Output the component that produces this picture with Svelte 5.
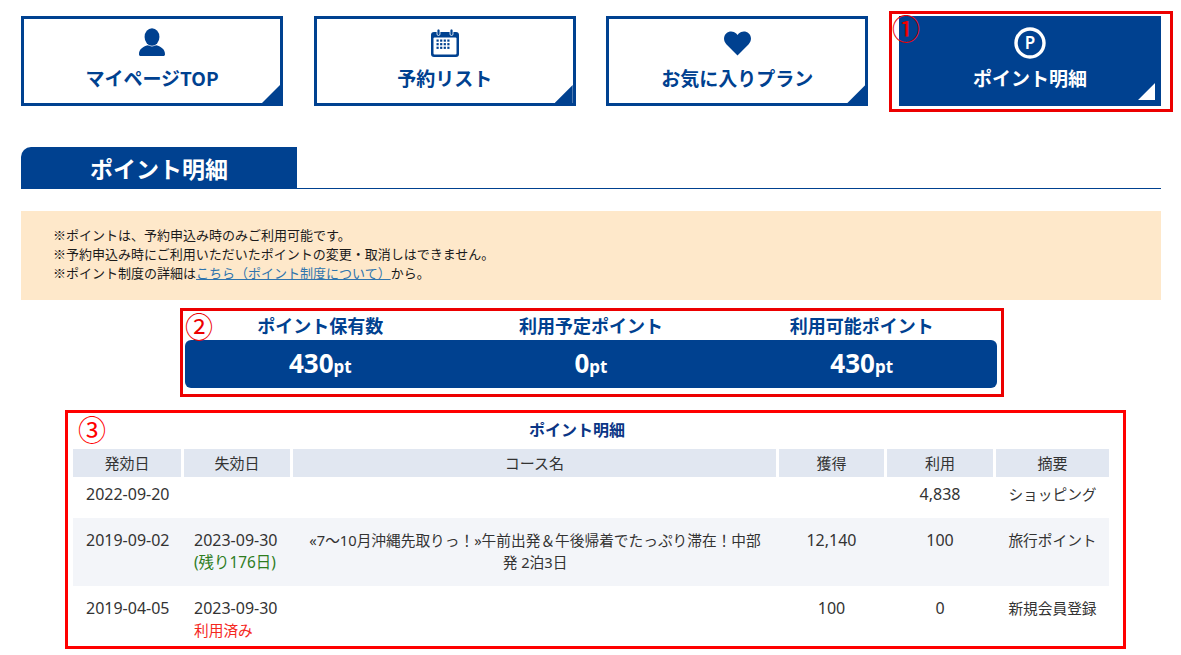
<script>
  const nav = [
    { label: 'マイページTOP', icon: 'user' },
    { label: '予約リスト', icon: 'cal' },
    { label: 'お気に入りプラン', icon: 'heart' },
    { label: 'ポイント明細', icon: 'point', active: true }
  ];
  const notes = ['※ポイントは、予約申込み時のみご利用可能です。', '※予約申込み時にご利用いただいたポイントの変更・取消しはできません。'];
  const totals = [
    { label: 'ポイント保有数', value: '430' },
    { label: '利用予定ポイント', value: '0' },
    { label: '利用可能ポイント', value: '430' }
  ];
  const heads = ['発効日', '失効日', 'コース名', '獲得', '利用', '摘要'];
  const rows = [
    { start: '2022-09-20', end: '', course: '', got: '', used: '4,838', memo: 'ショッピング' },
    { start: '2019-09-02', end: '2023-09-30', sub: '(残り176日)', subClass: 'green', course: '«7～10月沖縄先取りっ！»午前出発＆午後帰着でたっぷり滞在！中部発 2泊3日', got: '12,140', used: '100', memo: '旅行ポイント' },
    { start: '2019-04-05', end: '2023-09-30', sub: '利用済み', subClass: 'red', course: '', got: '100', used: '0', memo: '新規会員登録' }
  ];
  const dots = [];
  for (let y = 0; y < 3; y++) for (let x = 0; x < 4; x++) dots.push({ x: 6.5 + x * 3.6, y: 11.5 + y * 3.6 });
</script>

<div class="page">
  <nav class="nav">
    {#each nav as item}
      <a class="card" class:active={item.active} href="#top">
        <span class="icon">
          {#if item.icon === 'user'}
            <svg viewBox="0 0 28 32" width="26" height="30"><ellipse cx="14" cy="9.5" rx="8" ry="9.5" fill="currentColor"/><path d="M2 30c-1.4 0-2-.8-2-2 0-5 4-8 9.500-9.500 3 1.600 6 1.600 9 0C24 20 28 23 28 28c0 1.200-.6 2-2 2z" fill="currentColor"/></svg>
          {:else if item.icon === 'cal'}
            <svg viewBox="0 0 30 30" width="30" height="30">
              <rect x="1" y="4" width="28" height="25" rx="3" fill="currentColor"/>
              <rect x="3.500" y="9.500" width="23" height="17" rx="1" fill="#fff"/>
              <rect x="7" y="1" width="3" height="6.500" rx="1.500" fill="currentColor" stroke="#fff" stroke-width=".8"/>
              <rect x="20" y="1" width="3" height="6.500" rx="1.500" fill="currentColor" stroke="#fff" stroke-width=".8"/>
              {#each dots as d}<rect x={d.x} y={d.y} width="2.200" height="2.200" fill="currentColor"/>{/each}
            </svg>
          {:else if item.icon === 'heart'}
            <svg viewBox="0 0 28 25" width="27" height="25"><path d="M14 25 2.400 13.200C-.8 9.800-.7 4.800 2.300 2 5.300-.8 10-.6 12.700 2.200L14 3.700l1.300-1.500C18-.6 22.700-.8 25.700 2c3 2.800 3.100 7.800-.1 11.200z" fill="currentColor"/></svg>
          {:else}
            <svg viewBox="0 0 32 32" width="32" height="32"><circle cx="16" cy="16" r="14" fill="none" stroke="currentColor" stroke-width="3.400"/><text x="16" y="22" text-anchor="middle" class="ptext">P</text></svg>
          {/if}
        </span>
        <span class="label">{item.label}</span>
        <span class="corner"></span>
      </a>
    {/each}
  </nav>

  <div class="heading"><h1>ポイント明細</h1></div>

  <div class="notice">
    {#each notes as n}<p>{n}</p>{/each}
    <p>※ポイント制度の詳細は<a href="#top">こちら（ポイント制度について）</a>から。</p>
  </div>

  <section class="summary">
    <div class="labels">
      {#each totals as t}<div>{t.label}</div>{/each}
    </div>
    <div class="bar">
      {#each totals as t}<div><b>{t.value}</b><small>pt</small></div>{/each}
    </div>
  </section>

  <section class="history">
    <h2>ポイント明細</h2>
    <table>
      <thead>
        <tr>{#each heads as h}<th>{h}</th>{/each}</tr>
      </thead>
      <tbody>
        {#each rows as r}
          <tr>
            <td class="date first"><span class="digits">{r.start}</span></td>
            <td class="date second"><span class="digits">{r.end}</span>{#if r.sub}<br /><span class={r.subClass}>{r.sub}</span>{/if}</td>
            <td class="course">{r.course}</td>
            <td><span class="digits">{r.got}</span></td>
            <td><span class="digits">{r.used}</span></td>
            <td class="memo">{r.memo}</td>
          </tr>
        {/each}
      </tbody>
    </table>
  </section>

  <div class="frame f1"></div>
  <div class="frame f2"></div>
  <div class="frame f3"></div>
  <span class="num n1">①</span>
  <span class="num n2">②</span>
  <span class="num n3">③</span>
</div>

<style>
  :global(body) {
    margin: 0;
    background: #fff;
  }
  .page {
    position: relative;
    box-sizing: border-box;
    width: 1181px;
    height: 655px;
    overflow: hidden;
    padding: 16px 20px 0 21px;
    font-family: "Noto Sans CJK JP", "Noto Sans", sans-serif;
    color: #222;
  }
  .nav {
    display: flex;
    gap: 30.67px;
  }
  .card {
    position: relative;
    box-sizing: border-box;
    flex: 1;
    height: 90px;
    border: 3px solid #004190;
    display: flex;
    flex-direction: column;
    align-items: center;
    color: #004190;
    text-decoration: none;
    background: #fff;
  }
  .card.active {
    background: #004190;
    color: #fff;
  }
  .icon {
    height: 34px;
    margin-top: 7px;
    display: flex;
    align-items: center;
    justify-content: center;
  }
  .ptext {
    font: 600 17px "Noto Sans", sans-serif;
    fill: currentColor;
  }
  .label {
    font-size: 19px;
    font-weight: 700;
    line-height: 26px;
    margin-top: 5px;
  }
  .corner {
    position: absolute;
    right: 0;
    bottom: 0;
    width: 18px;
    height: 18px;
    background: #004190;
    clip-path: polygon(100% 0, 100% 100%, 0 100%);
  }
  .active .corner {
    background: #fff;
    right: 3px;
    bottom: 3px;
    width: 17px;
    height: 17px;
  }
  .heading {
    margin-top: 41px;
    border-bottom: 1px solid #004190;
    height: 41px;
  }
  h1 {
    margin: 0;
    width: 276px;
    height: 41px;
    background: #004190;
    border-radius: 10px 0 0 0;
    color: #fff;
    font-size: 23px;
    font-weight: 700;
    line-height: 42px;
    text-align: center;
  }
  .notice {
    margin-top: 22px;
    height: 89px;
    box-sizing: border-box;
    padding: 14px 32px 0;
    background: #fee8ca;
    font-size: 13px;
    line-height: 19px;
    color: #1a1a1a;
  }
  .notice p {
    margin: 0;
  }
  .notice a {
    color: #2f74ad;
    text-decoration: underline;
  }
  .summary {
    width: 812px;
    margin: 13px auto 0;
  }
  .labels,
  .bar {
    display: grid;
    grid-template-columns: repeat(3, 1fr);
    text-align: center;
  }
  .labels {
    height: 27px;
    font-size: 18px;
    font-weight: 700;
    line-height: 25px;
    color: #004190;
  }
  .bar {
    height: 48px;
    background: #004190;
    border-radius: 6px;
    color: #fff;
    line-height: 47px;
  }
  .bar b {
    font-size: 26px;
    font-family: "Noto Sans", sans-serif;
  }
  .bar small {
    font-size: 17px;
    font-weight: 700;
    font-family: "Noto Sans", sans-serif;
  }
  .history {
    width: 1036px;
    margin: 28px auto 0;
  }
  h2 {
    margin: 0;
    height: 33px;
    padding-right: 28px;
    font-size: 16px;
    font-weight: 700;
    line-height: 26px;
    text-align: center;
    color: #0a3585;
  }
  table {
    width: 100%;
    table-layout: fixed;
    border-collapse: separate;
    border-spacing: 0;
    font-family: "Noto Sans", "Noto Sans CJK JP", sans-serif;
    font-size: 14.7px;
    line-height: 22px;
    color: #333;
  }
  th {
    box-sizing: border-box;
    height: 28px;
    padding: 0;
    background: #e1e7f1;
    background-clip: padding-box;
    border-right: 3px solid #fff;
    font-weight: 400;
    font-size: 15px;
    text-align: center;
  }
  th:nth-child(1) { width: 111px; }
  th:nth-child(2) { width: 109px; }
  th:nth-child(3) { width: 486px; }
  th:nth-child(4) { width: 108px; }
  th:nth-child(5) { width: 109px; }
  th:nth-child(6) { width: 113px; border-right: 0; }
  td {
    box-sizing: border-box;
    padding-top: 11px;
    padding-right: 3px;
    padding-bottom: 13px;
    padding-left: 0;
    text-align: center;
    vertical-align: top;
  }
  td.memo {
    padding-right: 0;
  }
  tbody tr:first-child td {
    padding-top: 6px;
  }
  tbody tr:nth-child(2) td {
    background: #f3f5f9;
  }
  td.date {
    text-align: left;
  }
  td.first {
    padding-left: 13px;
  }
  td.second {
    padding-left: 10px;
  }
  td.course {
    padding-left: 12px;
    padding-right: 14px;
  }
  .digits {
    font-size: 16px;
    line-height: 1;
  }
  .green { color: #2f7d1f; font-size: 15.4px; line-height: 1; }
  .red { color: #f5281e; }
  .frame {
    position: absolute;
    box-sizing: border-box;
    border: 3px solid #ec0000;
    pointer-events: none;
  }
  .f1 { left: 889px; top: 11px; width: 284px; height: 101px; }
  .f2 { left: 180px; top: 308px; width: 824px; height: 89px; }
  .f3 { left: 65px; top: 410px; width: 1061px; height: 239px; border-color: #f00; }
  .num {
    position: absolute;
    font-size: 28px;
    line-height: 28px;
    color: #ec0000;
  }
  .n1 { left: 892px; top: 14px; font-weight: 500; }
  .n2 { left: 185px; top: 312px; }
  .n3 { left: 78px; top: 415px; color: #f00; }
</style>
